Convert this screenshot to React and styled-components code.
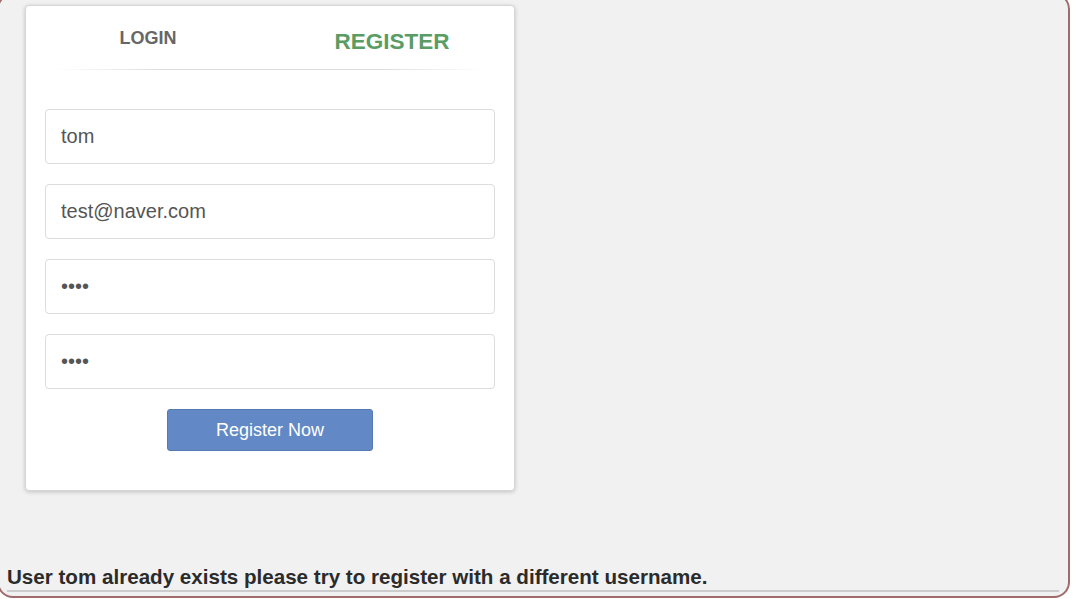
import React, { useState } from "react";
import styled, { createGlobalStyle } from "styled-components";

const GlobalStyle = createGlobalStyle`
  html, body {
    margin: 0;
    padding: 0;
    background: #ffffff;
    overflow: hidden;
  }
  body {
    font-family: "Liberation Sans", Arial, sans-serif;
  }
`;

const Page = styled.div`
  width: 1076px;
  height: 599px;
  overflow: hidden;
`;

const Frame = styled.div`
  box-sizing: border-box;
  margin: -7px 0 0 -3px;
  width: 1073px;
  height: 605px;
  border: 2px solid #a06b6b;
  border-radius: 16px;
  background: #f1f1f1;
  display: flex;
  flex-direction: column;
  padding: 10px 6px 4px 8px;
`;

const Card = styled.div`
  box-sizing: border-box;
  margin-left: 18px;
  width: 490px;
  background: #fff;
  border: 1px solid #d6d6d6;
  border-radius: 4px;
  box-shadow: 0 1px 4px rgba(0, 0, 0, 0.2);
  padding: 0 19px 39px;
`;

const Tabs = styled.div`
  display: flex;
  height: 63px;
  margin: 0 -19px;
`;

const Tab = styled.div`
  flex: 1;
  display: flex;
  justify-content: center;
  align-items: center;
  padding-top: ${(p) => (p.$active ? "8px" : "2px")};
  font-weight: bold;
  font-size: ${(p) => (p.$active ? "22.5px" : "18px")};
  color: ${(p) => (p.$active ? "#5a9d64" : "#666")};
  cursor: pointer;
`;

const Divider = styled.div`
  height: 1px;
  margin: 0 10px 39px;
  background: linear-gradient(
    to right,
    rgba(220, 220, 220, 0) 0%,
    #dcdcdc 25%,
    #dcdcdc 75%,
    rgba(220, 220, 220, 0) 100%
  );
`;

const Form = styled.form`
  display: flex;
  flex-direction: column;
  gap: 20px;
  margin: 0;
`;

const Input = styled.input`
  box-sizing: border-box;
  width: 450px;
  height: 55px;
  border: 1px solid #dcdcdc;
  border-radius: 4px;
  padding: 0 15px;
  font-family: "Liberation Sans", Arial, sans-serif;
  font-size: 20px;
  color: #555;
  outline: none;
  background: #fff;
`;

const Button = styled.button`
  align-self: center;
  box-sizing: border-box;
  width: 206px;
  height: 42px;
  background: #6289c5;
  border: 1px solid #5479b3;
  border-radius: 3px;
  color: #fff;
  font-family: "Liberation Sans", Arial, sans-serif;
  font-size: 18px;
  cursor: pointer;
`;

const Message = styled.div`
  margin-top: auto;
  font-weight: bold;
  font-size: 20.6px;
  color: #2b2b2b;
  line-height: 22px;
  padding-bottom: 2px;
  border-bottom: 2px solid #cccccc;
  margin-right: 3px;
`;

export default function App() {
  const [tab, setTab] = useState("register");
  return (
    <>
      <GlobalStyle />
      <Page>
        <Frame>
          <Card>
            <Tabs>
              <Tab $active={tab === "login"} onClick={() => setTab("login")}>
                LOGIN
              </Tab>
              <Tab $active={tab === "register"} onClick={() => setTab("register")}>
                REGISTER
              </Tab>
            </Tabs>
            <Divider />
            <Form onSubmit={(e) => e.preventDefault()}>
              <Input type="text" defaultValue="tom" />
              <Input type="email" defaultValue="test@naver.com" />
              <Input type="password" defaultValue="1234" />
              <Input type="password" defaultValue="1234" />
              <Button type="submit">Register Now</Button>
            </Form>
          </Card>
          <Message>
            User tom already exists please try to register with a different username.
          </Message>
        </Frame>
      </Page>
    </>
  );
}
